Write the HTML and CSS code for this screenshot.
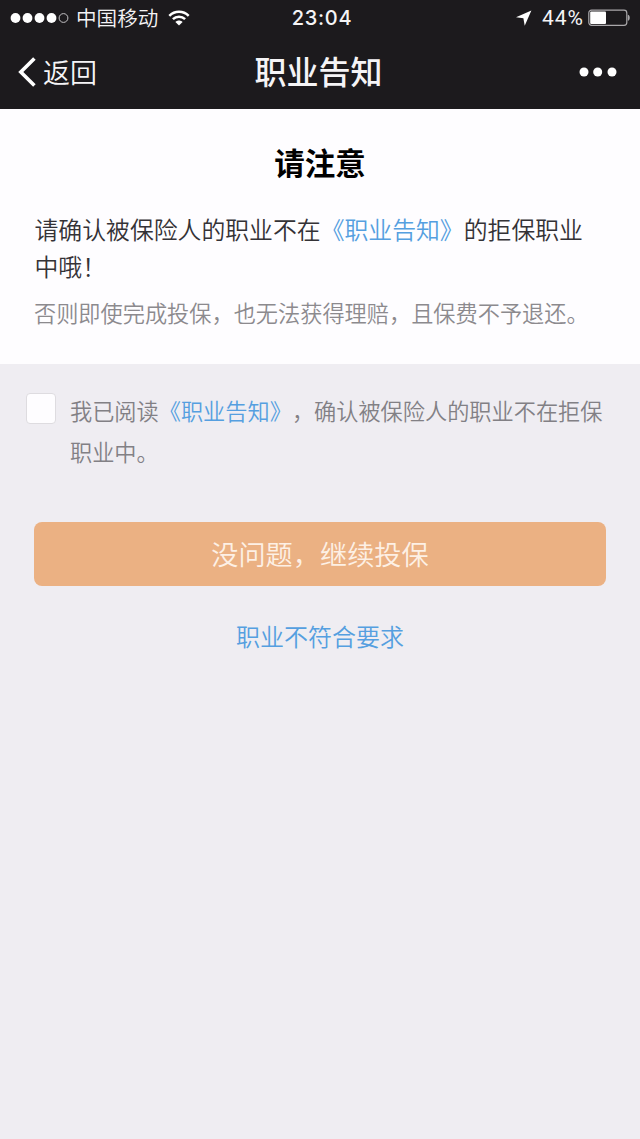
FILE: index.html
```html
<!DOCTYPE html>
<html lang="zh-CN">
<head>
<meta charset="utf-8">
<meta name="viewport" content="width=device-width">
<title>职业告知</title>
<link rel="stylesheet" href="styles.css">
</head>
<body>
<header class="top">
  <div class="status">
    <div class="status-left">
      <svg class="signal" width="60" height="12" viewBox="0 0 60 12" fill="#fff">
        <circle cx="5.5" cy="6" r="4.9"/><circle cx="17.5" cy="6" r="4.9"/><circle cx="29.5" cy="6" r="4.9"/><circle cx="41.5" cy="6" r="4.9"/>
        <circle cx="53.5" cy="6" r="4.4" fill="none" stroke="#c4c2c5" stroke-width="1"/>
      </svg>
      <span class="carrier">中国移动</span>
      <svg class="wifi" width="22" height="16" viewBox="0 0 22 16" fill="none" stroke="#fff" stroke-width="2.5">
        <path d="M1.3 5.9C6.7 .5 15.3 .5 20.7 5.9"/>
        <path d="M4.9 9.2C8.3 5.9 13.7 5.9 17.1 9.2"/>
        <path d="M11 15.6L7.4 11.9C9.4 9.9 12.6 9.9 14.6 11.9Z" fill="#fff" stroke="none"/>
      </svg>
    </div>
    <span class="clock">23:04</span>
    <div class="status-right">
      <svg class="locate" width="16" height="16" viewBox="0 0 16 16" fill="#fff"><path d="M15.4 .6L0 7.2L7.4 8.2L8.7 15.7Z"/></svg>
      <span class="percent">44%</span>
      <svg class="battery" width="43" height="18" viewBox="0 0 43 18">
        <rect x=".8" y="1.1" width="38" height="15.2" rx="2.8" fill="none" stroke="#aaa8ab" stroke-width="1.2"/>
        <rect x="2.2" y="2.5" width="15.8" height="12.4" rx="1" fill="#fff"/>
        <path d="M39.8 5.8c2.6.3 2.6 5.7 0 6z" fill="#aaa8ab"/>
      </svg>
    </div>
  </div>
  <nav class="nav">
    <a class="back">
      <svg width="18" height="30" viewBox="0 0 18 30" fill="none" stroke="#fff" stroke-width="3.6"><path d="M16.4 1.5L2.8 15L16.4 28.5"/></svg>
      <span>返回</span>
    </a>
    <h1 class="title">职业告知</h1>
    <svg class="more" width="38" height="10" viewBox="0 0 38 10" fill="#fff"><circle cx="5" cy="5" r="4.5"/><circle cx="18.7" cy="5" r="4.5"/><circle cx="33" cy="5" r="4.5"/></svg>
  </nav>
</header>
<main>
  <section class="notice">
    <h2 class="notice-title">请注意</h2>
    <p class="notice-text">请确认被保险人的职业不在<a class="link">《职业告知》</a>的拒保职业中哦！</p>
    <p class="notice-hint">否则即使完成投保，也无法获得理赔，且保费不予退还。</p>
  </section>
  <label class="agree">
    <span class="checkbox"></span>
    <span class="agree-text">我已阅读<a class="link">《职业告知》</a>，确认被保险人的职业不在拒保职业中。</span>
  </label>
  <button class="submit">没问题，继续投保</button>
  <a class="link reject">职业不符合要求</a>
</main>
</body>
</html>
```

FILE: styles.css
```css
* { box-sizing: border-box; }
body {
  margin: 0;
  min-height: 1139px;
  background: #efedf2;
  font-family: "Noto Sans CJK SC", sans-serif;
  font-weight: 350;
  text-spacing-trim: space-all;
}
h1, h2, p { margin: 0; }
.link { color: #559fe0; }
.top {
  height: 109px;
  background: #1c1a1d;
  color: #f5f4f6;
}
.status {
  display: grid;
  grid-template-columns: 1fr auto 1fr;
  align-items: center;
  height: 36px;
  padding: 0 9px 0 10px;
}
.status-left, .status-right { display: flex; align-items: center; }
.status-right { justify-content: flex-end; }
.carrier { margin-left: 6px; padding-bottom: 2px; font-size: 20.6px; line-height: 34px; }
.wifi { margin-left: 10px; }
.clock { font: 500 20px Inter, sans-serif; letter-spacing: .75px; margin-left: 3px; }
.percent { margin: 0 4px 0 10px; font: 400 21px Roboto, sans-serif; letter-spacing: 1px; }
.nav {
  display: grid;
  grid-template-columns: 1fr auto 1fr;
  align-items: center;
  height: 73px;
  padding: 0 23px 2px 18px;
}
.back { display: flex; align-items: center; gap: 7px; font-size: 27px; line-height: 40px; }
.title { padding: 0 0 4px 2px; font-size: 32px; font-weight: 500; line-height: 44px; }
.more { justify-self: end; }
.notice {
  height: 255px;
  padding: 31px 34px 0;
  background: #fefdff;
}
.notice-title { font-size: 30.5px; font-weight: 700; line-height: 45px; text-align: center; color: #000; }
.notice-text { margin-top: 25px; padding-left: .5px; font-size: 23.85px; line-height: 37px; color: #343236; }
.notice-hint { margin-top: 10px; font-size: 22.2px; line-height: 36px; color: #8c8a8e; white-space: nowrap; }
.agree { display: flex; gap: 14px; padding: 26px 30px 0 26px; }
.checkbox {
  flex: none;
  width: 30px;
  height: 31px;
  margin-top: 3px;
  border: 1px solid #dedce0;
  border-radius: 4px;
  background: #fefdff;
}
.agree-text { font-size: 22.2px; line-height: 41px; color: #828085; }
.submit {
  display: block;
  width: 572px;
  height: 64px;
  margin: 50px auto 0;
  padding: 0 0 2px;
  border: 0;
  border-radius: 8px;
  background: #ebb183;
  color: #fdf0e5;
  font: 350 27.2px/62px "Noto Sans CJK SC", sans-serif;
}
.reject { display: block; margin-top: 32px; font-size: 24px; line-height: 36px; text-align: center; }
```
